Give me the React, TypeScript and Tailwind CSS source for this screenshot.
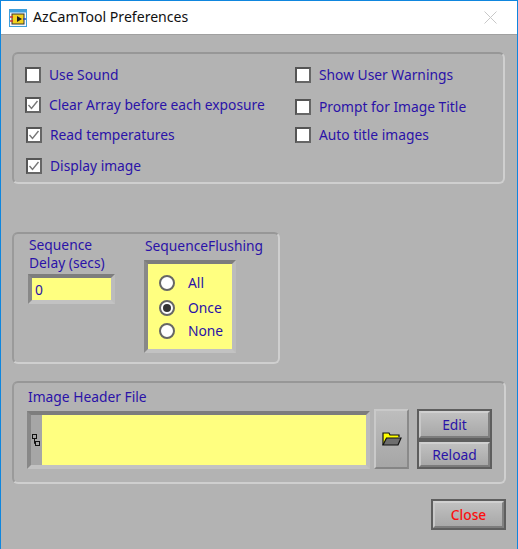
function Check({ label, checked, className = "" }: { label: string; checked?: boolean; className?: string }) {
  return (
    <div className={`flex items-center h-[17px] ${className}`}>
      <div className="w-[16px] h-[16px] shrink-0 bg-white border-2 border-t-[#555555] border-l-[#555555] border-r-[#666666] border-b-[#666666] flex items-center justify-center">
        {checked && (
          <svg width="12" height="12" viewBox="0 0 12 12">
            <path d="M1.5 6 L4.5 9.5 L10.5 2" fill="none" stroke="#777777" strokeWidth="1.4" />
          </svg>
        )}
      </div>
      <span className="ml-2 text-[13.8px] leading-none text-[#2a12a8] whitespace-nowrap">{label}</span>
    </div>
  );
}

function Radio({ label, checked, className = "" }: { label: string; checked?: boolean; className?: string }) {
  return (
    <div className={`flex items-center h-[16px] ${className}`}>
      <div className="w-[16px] h-[16px] rounded-full bg-white border-2 border-[#666666] flex items-center justify-center">
        {checked && <div className="w-[8px] h-[8px] rounded-full bg-[#333333]" />}
      </div>
      <span className="ml-[13px] text-[13.8px] leading-none text-[#2a12a8]">{label}</span>
    </div>
  );
}

function Button({ label, className = "", text = "text-[#2a12a8]" }: { label: string; className?: string; text?: string }) {
  return (
    <div className={`border-2 border-[#5e5e5e] ${className}`}>
      <div className="w-full h-full border-2 border-t-[#d0d0d0] border-l-[#c8c8c8] border-r-[#808080] border-b-[#7c7c7c] bg-gradient-to-b from-[#c0c0c0] to-[#a8a8a8] flex items-center justify-center">
        <span className={`text-[13.8px] leading-none ${text}`}>{label}</span>
      </div>
    </div>
  );
}

const groove = "border-2 border-t-[#979797] border-l-[#9a9a9a] border-r-[#cfcfcf] border-b-[#cfcfcf] rounded-[6px]";
const well = "border-4 border-t-[#7d7d7d] border-l-[#888888] border-r-[#bcbcbc] border-b-[#c2c2c2]";

export default function App() {
  return (
    <div className="w-[518px] h-[549px] flex flex-col bg-[#b3b3b3] border-x border-t border-[#0f86de] overflow-hidden font-['Noto_Sans',sans-serif]">
      <div className="h-[34px] shrink-0 bg-white flex items-center pl-[8px] pr-[20px] border-b border-[#a0a0a0]">
        <svg width="18" height="18" viewBox="0 0 18 18">
          <rect x="0.5" y="0.5" width="17" height="17" fill="#f5f8fc" stroke="#3f9fdc" />
          <rect x="0.5" y="0.5" width="17" height="3" fill="#3f9fdc" />
          <rect x="3" y="5" width="12" height="10" fill="#f2d21f" stroke="#333333" />
          <path d="M8 7 L13 10 L8 13 Z" fill="#222222" />
          <path d="M1 8 H4 M1 12 H4" stroke="#d03030" strokeWidth="1.4" />
          <path d="M14 10 H17" stroke="#2040c0" strokeWidth="1.4" />
        </svg>
        <span className="ml-[6px] text-[14.1px] leading-none text-[#111111]">AzCamTool Preferences</span>
        <svg className="ml-auto" width="13" height="13" viewBox="0 0 13 13">
          <path d="M0.5 0.5 L12.5 12.5 M12.5 0.5 L0.5 12.5" stroke="#c8c8c8" strokeWidth="1" />
        </svg>
      </div>

      <div className="flex-1 flex flex-col pl-[11px] pr-[11px] pt-[17px]">
        <div className={`${groove} w-[493px] h-[132px] flex pt-[12px]`}>
          <div className="w-[281px] pl-[11px]">
            <Check label="Use Sound" />
            <Check label="Clear Array before each exposure" checked className="mt-[13px]" />
            <Check label="Read temperatures" checked className="mt-[13px] ml-[1px]" />
            <Check label="Display image" checked className="mt-[14px] ml-[1px]" />
          </div>
          <div>
            <Check label="Show User Warnings" />
            <Check label="Prompt for Image Title" className="mt-[15px]" />
            <Check label="Auto title images" className="mt-[11px]" />
          </div>
        </div>

        <div className={`${groove} mt-[48px] w-[268px] h-[132px] flex pl-[14px] pt-[1px]`}>
          <div className="w-[116px]">
            <div className="pl-[1px] pt-[1px] text-[13.8px] leading-[18px] text-[#2a12a8]">Sequence<br />Delay (secs)</div>
            <div className={`${well} w-[87px] h-[30px] mt-[2px]`}>
              <div className="w-full h-full bg-[#ffff80] text-[13.8px] leading-[23px] pl-[3px] text-[#2a12a8]">0</div>
            </div>
          </div>
          <div>
            <div className="mt-[2px] pl-[1px] text-[13.8px] leading-[18px] text-[#2a12a8] whitespace-nowrap">SequenceFlushing</div>
            <div className={`${well} w-[92px] h-[93px] mt-[5px]`}>
              <div className="w-full h-full bg-[#ffff80] flex flex-col pl-[11px] pt-[11px]">
                <Radio label="All" />
                <Radio label="Once" checked className="mt-[9px]" />
                <Radio label="None" className="mt-[7px]" />
              </div>
            </div>
          </div>
        </div>

        <div className={`${groove} mt-[17px] w-[494px] h-[103px] pl-[13px] pt-[4px]`}>
          <div className="text-[13.8px] leading-[20px] pl-[1px] text-[#2a12a8]">Image Header File</div>
          <div className="flex mt-[4px]">
            <div className={`${well} w-[343px] h-[58px] flex`}>
              <div className="w-[11px] h-full bg-[#a6a6a6] flex items-center justify-center">
                <svg width="9" height="13" viewBox="0 0 9 13">
                  <rect x="0.5" y="0.5" width="4" height="4" fill="none" stroke="#111111" />
                  <rect x="3.5" y="7.5" width="4" height="4" fill="none" stroke="#111111" />
                  <path d="M2.5 4.5 V9.5 H3.5" fill="none" stroke="#111111" />
                </svg>
              </div>
              <div className="flex-1 bg-[#ffff80]" />
            </div>
            <div className="ml-[4px] -mt-[2px] w-[35px] h-[60px] border-2 border-t-[#c9c9c9] border-l-[#c9c9c9] border-r-[#8a8a8a] border-b-[#858585] bg-gradient-to-b from-[#bdbdbd] to-[#a6a6a6] flex items-center justify-center">
              <svg width="20" height="14" viewBox="0 0 20 14">
                <path d="M1 13 V1 H7 L8 3 H17 V5" fill="#ffff00" stroke="#111111" strokeWidth="1.2" />
                <path d="M1 13 L4.5 6 H19 L16 13 Z" fill="#6e6e6e" stroke="#111111" strokeWidth="1.2" />
              </svg>
            </div>
            <div className="ml-[8px] -mt-[2px] flex flex-col">
              <Button label="Edit" className="w-[75px] h-[31px]" />
              <Button label="Reload" className="w-[75px] h-[29px]" />
            </div>
          </div>
        </div>

        <div className="flex justify-end mt-[15px]">
          <Button label="Close" className="w-[75px] h-[31px]" text="text-[#fb0f0f] font-medium" />
        </div>
      </div>
    </div>
  );
}
